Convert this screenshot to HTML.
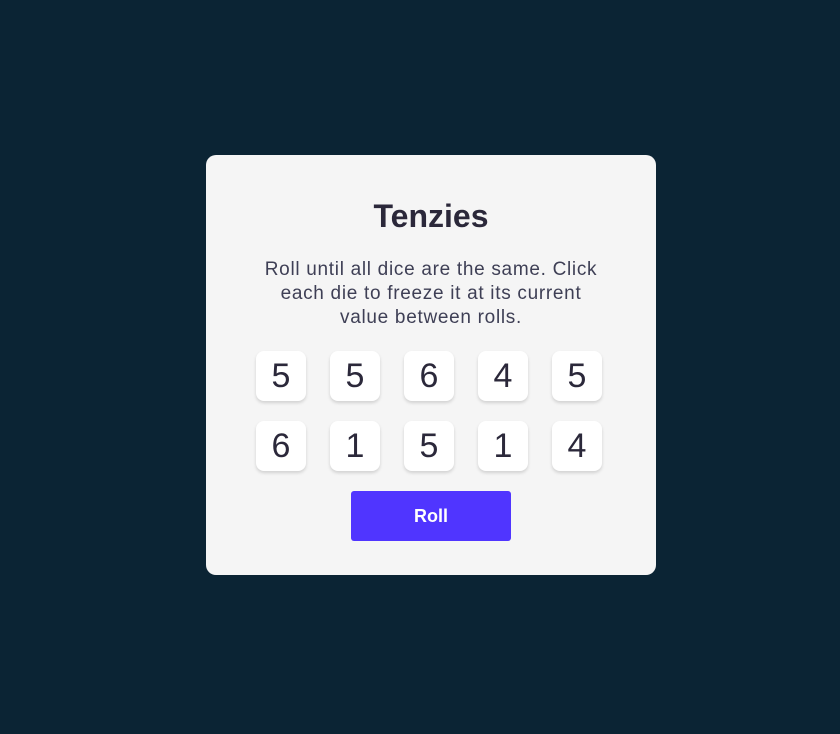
<!DOCTYPE html>
<html><head><style>
body{margin:0;width:840px;height:734px;background:#0b2434;font-family:"Liberation Sans",sans-serif;position:relative;overflow:hidden}
.card{position:absolute;left:206px;top:155px;width:450px;height:420px;background:#f5f5f5;border-radius:10px}
h1{position:absolute;top:196px;left:206px;width:450px;margin:0;text-align:center;font-size:32px;font-weight:600;color:#2b283a;line-height:40px}
p{position:absolute;top:258px;left:206px;width:450px;margin:0;text-align:center;font-size:19px;line-height:24px;color:#3e3f55;letter-spacing:0.7px;white-space:nowrap}
.d{position:absolute;width:50px;height:50px;background:#fff;border-radius:8px;box-shadow:0 2px 3px rgba(0,0,0,.15);font-size:34px;line-height:50px;text-align:center;color:#2b283a;font-weight:500}
.b{position:absolute;left:351px;top:491px;width:160px;height:50px;background:#5035ff;border-radius:3px;color:#fff;font-weight:bold;font-size:18px;line-height:50px;text-align:center}
</style></head><body>
<div class="card"></div>
<h1>Tenzies</h1>
<p>Roll until all dice are the same. Click<br>each die to freeze it at its current<br>value between rolls.</p>
<div class="d" style="left:256px;top:351px">5</div>
<div class="d" style="left:330px;top:351px">5</div>
<div class="d" style="left:404px;top:351px">6</div>
<div class="d" style="left:478px;top:351px">4</div>
<div class="d" style="left:552px;top:351px">5</div>
<div class="d" style="left:256px;top:421px">6</div>
<div class="d" style="left:330px;top:421px">1</div>
<div class="d" style="left:404px;top:421px">5</div>
<div class="d" style="left:478px;top:421px">1</div>
<div class="d" style="left:552px;top:421px">4</div>
<div class="b">Roll</div>
</body></html>
